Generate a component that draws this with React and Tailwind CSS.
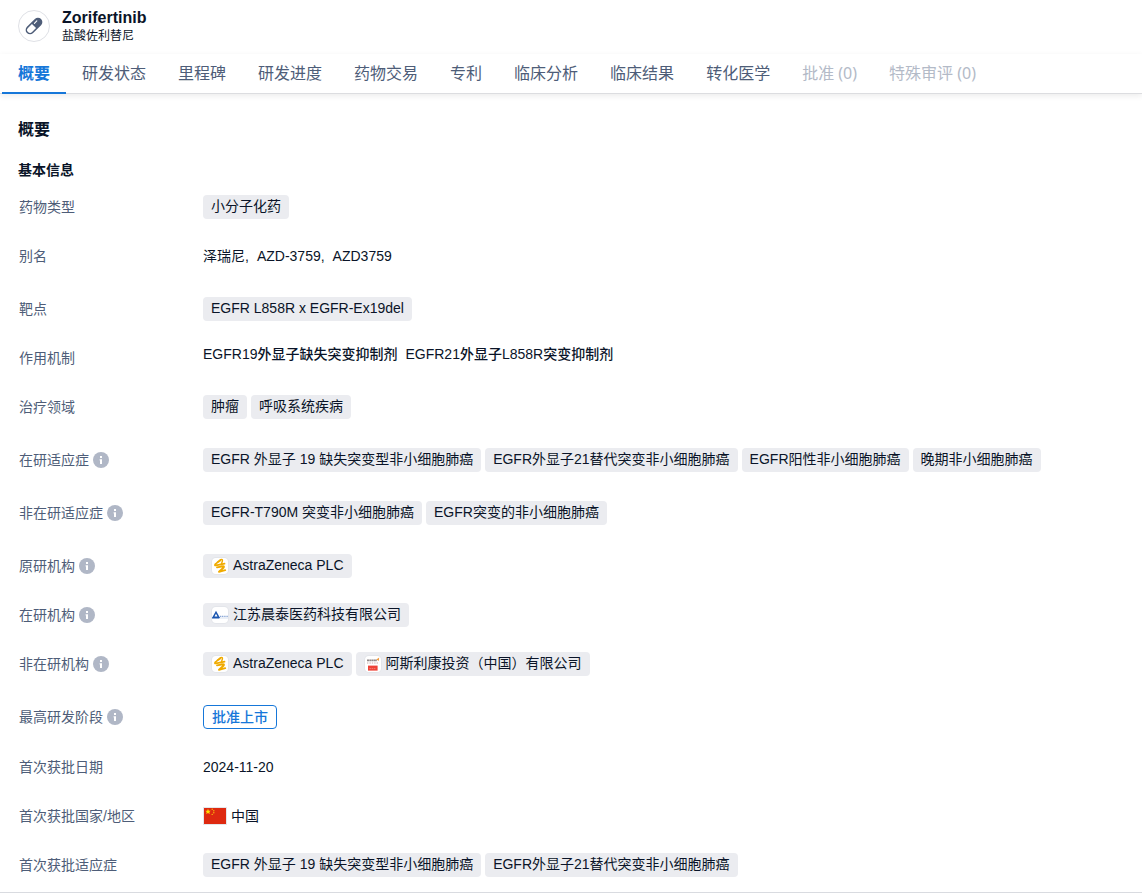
import React, { useState } from 'react';
import clsx from 'clsx';

const TABS = [
    { label: '概要' },
    { label: '研发状态' },
    { label: '里程碑' },
    { label: '研发进度' },
    { label: '药物交易' },
    { label: '专利' },
    { label: '临床分析' },
    { label: '临床结果' },
    { label: '转化医学' },
    { label: '批准 (0)', disabled: true },
    { label: '特殊审评 (0)', disabled: true },
];

const ROW_HEIGHTS = {
    sm: 'min-h-[49px]',
    md: 'min-h-[50px]',
    lg: 'min-h-[53px]',
};

const PillIcon = () => (
    <svg width="18" height="18" viewBox="0 0 18 18" aria-hidden="true">
        <g transform="rotate(45 9 9)">
            <rect x="4.6" y="-1" width="8.8" height="20" rx="4.4" fill="#4e5d78" />
            <path d="M6.1 9h5.800v5.600a2.900 2.900 0 0 1-5.800 0z" fill="#fff" />
            <path d="M7.400 3.400v3.400" stroke="#fff" strokeWidth="1.100" strokeLinecap="round" />
        </g>
    </svg>
);

const InfoIcon = () => (
    <svg width="16" height="16" viewBox="0 0 16 16" className="shrink-0" aria-hidden="true">
        <circle cx="8" cy="8" r="8" fill="#b0b7c6" />
        <rect x="7" y="4" width="2" height="2" fill="#fff" />
        <path d="M6.6 7.2H9v4.8H7V8.4h-.4z" fill="#fff" />
    </svg>
);

const AstraZenecaLogo = () => (
    <svg width="16" height="16" viewBox="0 0 16 16" aria-hidden="true">
        <g fill="none" stroke="#f0ab00" strokeLinejoin="round" strokeLinecap="round">
            <path d="M5.200 4.200 8.600 1.600C10 1 10.800 1.800 10.400 3L9.200 6.800" strokeWidth="1.400" />
            <path d="M8.600 2.400 3.200 6.200C2.400 7.400 3 7.600 4 7.400L12.600 5.600" strokeWidth="1.600" />
            <path d="M5 9.400 11 8.200C12.200 8.200 12.200 9 11.400 9.800L7 13.800 13.200 12.200" strokeWidth="1.900" />
        </g>
    </svg>
);

const ChentaiLogo = () => (
    <svg width="16" height="16" viewBox="0 0 16 16" aria-hidden="true">
        <path d="M1.2 10.3 4 5.2l2.8 5.1z" fill="none" stroke="#1d57b0" strokeWidth="1.5" />
        <path d="M0 11h7.4" stroke="#1d57b0" strokeWidth="1" />
        <path d="M8 9.3h8" stroke="#5d86c6" strokeWidth="0.9" strokeDasharray="1.2 0.6" />
        <path d="M8 11h8" stroke="#b9c9e4" strokeWidth="0.6" />
    </svg>
);

const InvestLogo = () => (
    <svg width="16" height="16" viewBox="0 0 16 16" aria-hidden="true">
        <path d="M2 4.4h10" stroke="#8d8585" strokeWidth="1.8" strokeDasharray="2 0.3" />
        <path d="M11.4 3.6 14.2 1.4l-.4 3.6z" fill="#f29a3a" />
        <path d="M2 7h12" stroke="#c8a9a9" strokeWidth="1" strokeDasharray="1.4 1" />
        <rect x="3" y="9.6" width="9.6" height="5" fill="#ee4136" />
        <path d="M4.4 12.6h6.4" stroke="#f68f88" strokeWidth="0.8" strokeDasharray="1.6 0.6" />
    </svg>
);

const ChinaFlag = () => (
    <svg width="24" height="18" viewBox="0 0 24 18" className="shrink-0" aria-hidden="true">
        <rect x="0.5" y="0.5" width="23" height="17" fill="#de2910" stroke="#e4e6ea" />
        <path d="m5 1.8.8 1.9 2 .1-1.5 1.3.5 2L5 6 3.2 7.1l.5-2L2.2 3.800l2-.1z" fill="#ffde00" />
        <g fill="#f9b80c">
            <circle cx="9.2" cy="2.2" r="0.7" />
            <circle cx="10.8" cy="3.8" r="0.7" />
            <circle cx="10.8" cy="5.8" r="0.7" />
            <circle cx="9.2" cy="7.4" r="0.7" />
        </g>
    </svg>
);

const Tag = ({ logo, medium, children }) => (
    <span
        className={clsx(
            'inline-flex h-6 items-center rounded bg-[#ebecf0] px-2 pb-0.5 whitespace-nowrap',
            medium && 'font-medium'
        )}
    >
        {logo && (
            <span className="mt-0.5 mr-[5px] ml-px flex size-4 items-center justify-center rounded-sm bg-white ring-1 ring-[#e3e5ea]">
                {logo}
            </span>
        )}
        {children}
    </span>
);

const Row = ({ label, info, size = 'sm', children }) => (
    <div className={clsx('flex items-start', ROW_HEIGHTS[size])}>
        <dt className="flex h-6 w-[185px] shrink-0 items-center gap-1 pl-px text-[#4e5d78]">
            {label}
            {info && <InfoIcon />}
        </dt>
        <dd className="flex min-h-6 min-w-0 flex-wrap items-center gap-1">{children}</dd>
    </div>
);

const App = () => {
    const [active, setActive] = useState('概要');

    return (
        <div className="border-b border-[#d9dbe0] bg-white font-['Liberation_Sans','Noto_Sans_CJK_SC',sans-serif] text-sm text-[#0a1428]">
            {/* Header */}
            <header className="flex items-center gap-3 px-[18px] pt-2">
                <div className="flex size-8 items-center justify-center rounded-full border border-[#dfe1e6]">
                    <PillIcon />
                </div>
                <div>
                    <h1 className="text-base leading-5 font-bold">Zorifertinib</h1>
                    <p className="text-xs leading-4">盐酸佐利替尼</p>
                </div>
            </header>

            {/* Tabs */}
            <nav className="mt-2.5 flex border-b border-[#dcdde0] px-0.5 shadow-[0_2px_6px_rgba(0,0,0,0.08)]" role="tablist">
                {TABS.map(tab => (
                    <button
                        key={tab.label}
                        type="button"
                        role="tab"
                        aria-selected={active === tab.label}
                        disabled={tab.disabled}
                        onClick={() => setActive(tab.label)}
                        className={clsx(
                            "-mb-px h-10 border-b-2 px-4 font-['Noto_Sans','Noto_Sans_CJK_SC',sans-serif] text-base leading-6 whitespace-nowrap",
                            active === tab.label
                                ? 'border-[#1677d9] font-bold text-[#1677d9]'
                                : 'border-transparent',
                            tab.disabled && 'text-[#b3bac7]',
                            !tab.disabled && active !== tab.label && 'text-[#4e5d78]'
                        )}
                    >
                        {tab.label}
                    </button>
                ))}
            </nav>

            {/* Overview */}
            <main className="px-[18px] pt-6">
                <h2 className="text-base leading-6 font-bold">概要</h2>
                <h3 className="mt-4 leading-6 font-bold">基本信息</h3>

                <dl className="mt-[13px] -mb-2.5">
                    <Row label="药物类型">
                        <Tag>小分子化药</Tag>
                    </Row>
                    <Row label="别名" size="lg">
                        <span className="mr-1">泽瑞尼,</span>
                        <span className="mr-1">AZD-3759,</span>
                        <span>AZD3759</span>
                    </Row>
                    <Row label="靶点">
                        <Tag medium>EGFR L858R x EGFR-Ex19del</Tag>
                    </Row>
                    <Row label="作用机制">
                        <div className="flex flex-wrap gap-x-2 pb-2 leading-4 font-medium">
                            <span>EGFR19外显子缺失突变抑制剂</span>
                            <span>EGFR21外显子L858R突变抑制剂</span>
                        </div>
                    </Row>
                    <Row label="治疗领域" size="lg">
                        <Tag>肿瘤</Tag>
                        <Tag>呼吸系统疾病</Tag>
                    </Row>
                    <Row label="在研适应症" info size="lg">
                        <Tag>EGFR 外显子 19 缺失突变型非小细胞肺癌</Tag>
                        <Tag>EGFR外显子21替代突变非小细胞肺癌</Tag>
                        <Tag>EGFR阳性非小细胞肺癌</Tag>
                        <Tag>晚期非小细胞肺癌</Tag>
                    </Row>
                    <Row label="非在研适应症" info size="lg">
                        <Tag>EGFR-T790M 突变非小细胞肺癌</Tag>
                        <Tag>EGFR突变的非小细胞肺癌</Tag>
                    </Row>
                    <Row label="原研机构" info>
                        <Tag logo={<AstraZenecaLogo />}>AstraZeneca PLC</Tag>
                    </Row>
                    <Row label="在研机构" info>
                        <Tag logo={<ChentaiLogo />}>江苏晨泰医药科技有限公司</Tag>
                    </Row>
                    <Row label="非在研机构" info size="lg">
                        <Tag logo={<AstraZenecaLogo />}>AstraZeneca PLC</Tag>
                        <Tag logo={<InvestLogo />}>阿斯利康投资（中国）有限公司</Tag>
                    </Row>
                    <Row label="最高研发阶段" info size="md">
                        <span className="inline-flex h-6 items-center rounded border border-[#1677d9] px-2 pb-px font-medium text-[#1677d9]">
                            批准上市
                        </span>
                    </Row>
                    <Row label="首次获批日期">2024-11-20</Row>
                    <Row label="首次获批国家/地区">
                        <ChinaFlag />
                        <span>中国</span>
                    </Row>
                    <Row label="首次获批适应症">
                        <Tag>EGFR 外显子 19 缺失突变型非小细胞肺癌</Tag>
                        <Tag>EGFR外显子21替代突变非小细胞肺癌</Tag>
                    </Row>
                </dl>
            </main>
        </div>
    );
};

export default App;
